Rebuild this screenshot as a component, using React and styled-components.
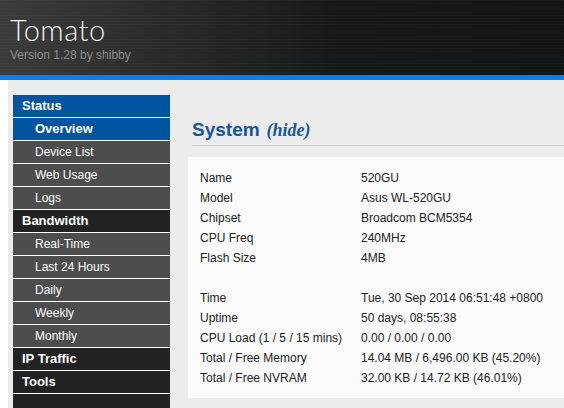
import styled, { createGlobalStyle } from "styled-components";

const GlobalStyle = createGlobalStyle`
    html, body {
        margin: 0;
        padding: 0;
        background: #ffffff;
        font-family: "Liberation Sans", Arial, sans-serif;
    }
`

const Page = styled.div`
    width: 564px;
    height: 408px;
    overflow: hidden;
    display: flex;
    flex-direction: column;
`

const Header = styled.header`
    height: 60px;
    flex-shrink: 0;
    border-bottom: 5px solid #0a7fec;
    padding: 15px 0 0 10px;
    box-sizing: content-box;
    background:
        repeating-linear-gradient(180deg, rgba(255,255,255,0.025) 0 1px, rgba(0,0,0,0) 1px 3px),
        linear-gradient(90deg, #3b3b3b 0%, #262626 35%, #161718 60%, #121314 100%);
`

const Brand = styled.h1`
    margin: 0;
    font-family: "Lato", "Liberation Sans", sans-serif;
    font-weight: 300;
    font-size: 29px;
    line-height: 29px;
    color: #f2f2f2;
    letter-spacing: 0.5px;
`

const Version = styled.div`
    margin-top: 4px;
    font-size: 12px;
    color: #8e8e8e;
`

const Body = styled.div`
    flex: 1;
    display: flex;
`

const Strip = styled.div`
    width: 8px;
    background: #ffffff;
    flex-shrink: 0;
`

const Main = styled.div`
    flex: 1;
    display: flex;
    align-items: flex-start;
    gap: 18px;
    background: #ececec;
    padding: 15px 0 0 5px;
`

const Nav = styled.nav`
    width: 157px;
    flex-shrink: 0;
    display: flex;
    flex-direction: column;
`

const NavItem = styled.div`
    height: 22px;
    line-height: 22px;
    border-bottom: 1px solid #ffffff;
    padding-left: ${p => (p.$sub ? "22px" : "9px")};
    font-size: ${p => (p.$bold ? "13px" : "12px")};
    font-weight: ${p => (p.$bold ? "bold" : "normal")};
    color: #ffffff;
    background: ${p => (p.$active ? "#0054a0" : p.$sub ? "#4d4d4d" : "#222222")};
    white-space: nowrap;
`

const Content = styled.section`
    flex: 1;
    display: flex;
    flex-direction: column;
    min-width: 0;
`

const SectionTitle = styled.h2`
    margin: 24px 0 0 4px;
    padding-bottom: 4px;
    border-bottom: 1px solid #cccccc;
    font-size: 19px;
    line-height: 22px;
    font-weight: bold;
    color: #1656a0;
    white-space: nowrap;
`

const Hide = styled.span`
    margin-left: 7px;
    font-family: "Liberation Serif", "Times New Roman", serif;
    font-style: italic;
    font-size: 18px;
    font-weight: bold;
`

const Panel = styled.div`
    margin-top: 11px;
    background: #fafafa;
    padding: 11px 0 10px 12px;
    width: 420px;
`

const Row = styled.div`
    display: flex;
    height: 20px;
    line-height: 20px;
    font-size: 12px;
    color: #222222;
    white-space: nowrap;
`

const Label = styled.div`
    width: 161px;
    flex-shrink: 0;
`

const Value = styled.div``

const Spacer = styled.div`
    height: 20px;
`

const navItems = [
    { text: "Status", bold: true, active: true },
    { text: "Overview", bold: true, active: true, sub: true },
    { text: "Device List", sub: true },
    { text: "Web Usage", sub: true },
    { text: "Logs", sub: true },
    { text: "Bandwidth", bold: true },
    { text: "Real-Time", sub: true },
    { text: "Last 24 Hours", sub: true },
    { text: "Daily", sub: true },
    { text: "Weekly", sub: true },
    { text: "Monthly", sub: true },
    { text: "IP Traffic", bold: true },
    { text: "Tools", bold: true },
    { text: "", bold: true },
];

const hardware = [
    ["Name", "520GU"],
    ["Model", "Asus WL-520GU"],
    ["Chipset", "Broadcom BCM5354"],
    ["CPU Freq", "240MHz"],
    ["Flash Size", "4MB"],
];

const status = [
    ["Time", "Tue, 30 Sep 2014 06:51:48 +0800"],
    ["Uptime", "50 days, 08:55:38"],
    ["CPU Load (1 / 5 / 15 mins)", "0.00 / 0.00 / 0.00"],
    ["Total / Free Memory", "14.04 MB / 6,496.00 KB (45.20%)"],
    ["Total / Free NVRAM", "32.00 KB / 14.72 KB (46.01%)"],
];

const App = () => {
    return (
        <>
            <GlobalStyle />
            <Page>
                <Header>
                    <Brand>Tomato</Brand>
                    <Version>Version 1.28 by shibby</Version>
                </Header>
                <Body>
                    <Strip />
                    <Main>
                        <Nav>
                            {navItems.map((item, i) => (
                                <NavItem key={i} $bold={item.bold} $active={item.active} $sub={item.sub}>
                                    {item.text}
                                </NavItem>
                            ))}
                        </Nav>
                        <Content>
                            <SectionTitle>
                                System<Hide>(hide)</Hide>
                            </SectionTitle>
                            <Panel>
                                {hardware.map(([k, v]) => (
                                    <Row key={k}><Label>{k}</Label><Value>{v}</Value></Row>
                                ))}
                                <Spacer />
                                {status.map(([k, v]) => (
                                    <Row key={k}><Label>{k}</Label><Value>{v}</Value></Row>
                                ))}
                            </Panel>
                        </Content>
                    </Main>
                </Body>
            </Page>
        </>
    );
}

export default App;
